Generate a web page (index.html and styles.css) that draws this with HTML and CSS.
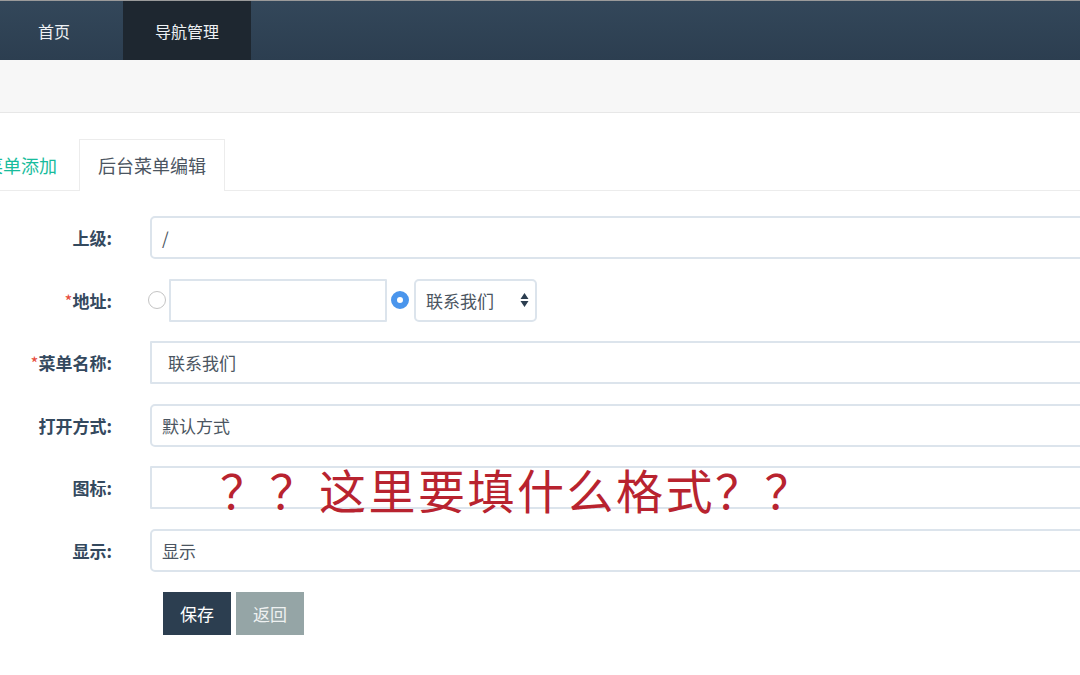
FILE: index.html
```html
<!DOCTYPE html>
<html lang="zh-CN">
<head>
    <meta charset="UTF-8">
    <title>后台菜单编辑</title>
    <link rel="stylesheet" href="styles.css">
</head>
<body>

<div class="navbar">
    <a class="nav-item" href="#">首页</a>
    <a class="nav-item active" href="#">导航管理</a>
</div>
<div class="subbar"></div>

<div class="main">
    <ul class="tabs">
        <li class="tab"><a href="#">后台菜单添加</a></li>
        <li class="tab active"><a href="#">后台菜单编辑</a></li>
    </ul>

    <form class="menu-form">
        <div class="row">
            <label class="label">上级:</label>
            <div class="field">/</div>
        </div>
        <div class="row">
            <label class="label"><span class="req">*</span>地址:</label>
            <div class="addr">
                <span class="radio"></span>
                <div class="field small square"></div>
                <span class="radio checked"></span>
                <div class="field select">联系我们
                    <svg class="arrows" width="9" height="16" viewBox="0 0 9 16"><path d="M4.5 1L8.5 7H0.5Z M4.5 15L8.5 9H0.5Z" fill="#2c3e50"/></svg>
                </div>
            </div>
        </div>
        <div class="row">
            <label class="label"><span class="req">*</span>菜单名称:</label>
            <div class="field square indent">联系我们</div>
        </div>
        <div class="row">
            <label class="label">打开方式:</label>
            <div class="field">默认方式</div>
        </div>
        <div class="row">
            <label class="label">图标:</label>
            <div class="field square"></div>
        </div>
        <div class="row">
            <label class="label">显示:</label>
            <div class="field">显示</div>
        </div>
        <div class="actions">
            <button type="button" class="btn btn-primary">保存</button>
            <button type="button" class="btn btn-default">返回</button>
        </div>

        <!-- note written over the screenshot -->
        <div class="note">？？这里要填什么格式？？</div>
    </form>
</div>

</body>
</html>
```

FILE: styles.css
```css
body {
    margin: 0;
    font-family: "Noto Sans CJK SC", "Noto Sans", sans-serif;
    background-color: #fff;
    color: #2c3e50;
    overflow: hidden;
}
.navbar {
    display: flex;
    height: 59px;
    border-top: 1px solid #9a9a9a;
    background: linear-gradient(#33475a, #2c3e50);
    padding-left: 6px;
}
.nav-item {
    display: flex;
    align-items: center;
    padding: 0 32px;
    color: #eef1f4;
    font-size: 16px;
    text-decoration: none;
}
.nav-item.active {
    margin-left: 21px;
    background-color: #1e2730;
}
.subbar {
    height: 52px;
    background-color: #f7f7f7;
    border-bottom: 1px solid #e7e7e7;
}
.main {
    padding-top: 26px;
}
.tabs {
    display: flex;
    list-style: none;
    margin: 0;
    padding: 0;
    margin-left: -70px;
    border-bottom: 1px solid #ececec;
}
.tab {
    margin-right: 3px;
    margin-bottom: -1px;
}
.tab a {
    display: block;
    height: 51px;
    line-height: 51px;
    padding: 0 18px;
    font-size: 18px;
    color: #18bc9c;
    text-decoration: none;
    border: 1px solid transparent;
    border-bottom: none;
}
.tab.active a {
    color: #4b5561;
    background-color: #fff;
    border-color: #ececec;
}
.menu-form {
    position: relative;
    padding-top: 25px;
}
.row {
    display: flex;
    align-items: center;
    margin-bottom: 19.6px;
}
.label {
    width: 112px;
    text-align: right;
    font-size: 17px;
    font-weight: bold;
    margin-right: 38px;
    color: #34495e;
}
.req {
    color: #e74c3c;
    font-weight: normal;
}
.field {
    flex: 1;
    margin-right: -40px;
    height: 43px;
    box-sizing: border-box;
    border: 2px solid #dce4ec;
    border-radius: 5px;
    padding: 0 10px;
    display: flex;
    align-items: center;
    font-size: 17px;
    color: #4b5561;
}
.field.square {
    border-radius: 1px;
}
.field.indent {
    padding-left: 16px;
}
.addr {
    display: flex;
    align-items: center;
    margin-left: -2px;
}
.radio {
    width: 18px;
    height: 18px;
    box-sizing: border-box;
    border: 1px solid #c4c4c4;
    border-radius: 50%;
    margin-right: 3px;
}
.radio.checked {
    border: 6px solid #4a95ec;
    background-color: #fff;
    margin-left: 4px;
    margin-right: 5px;
}
.field.small {
    flex: none;
    width: 218px;
    margin-right: 0;
}
.field.select {
    flex: none;
    width: 123px;
    margin-right: 0;
    justify-content: space-between;
    padding-right: 6px;
}
.actions {
    display: flex;
    gap: 5px;
    margin-left: 163px;
}
.btn {
    width: 68px;
    height: 43px;
    border: none;
    font-family: inherit;
    font-size: 17px;
    color: #fff;
    cursor: pointer;
}
.btn-primary {
    background-color: #2c3e50;
}
.btn-default {
    background-color: #95a5a6;
    color: #eef1f1;
}
.note {
    position: absolute;
    left: 220px;
    top: 263px;
    font-size: 47px;
    letter-spacing: 2.5px;
    color: #b8232f;
    white-space: nowrap;
}
```
